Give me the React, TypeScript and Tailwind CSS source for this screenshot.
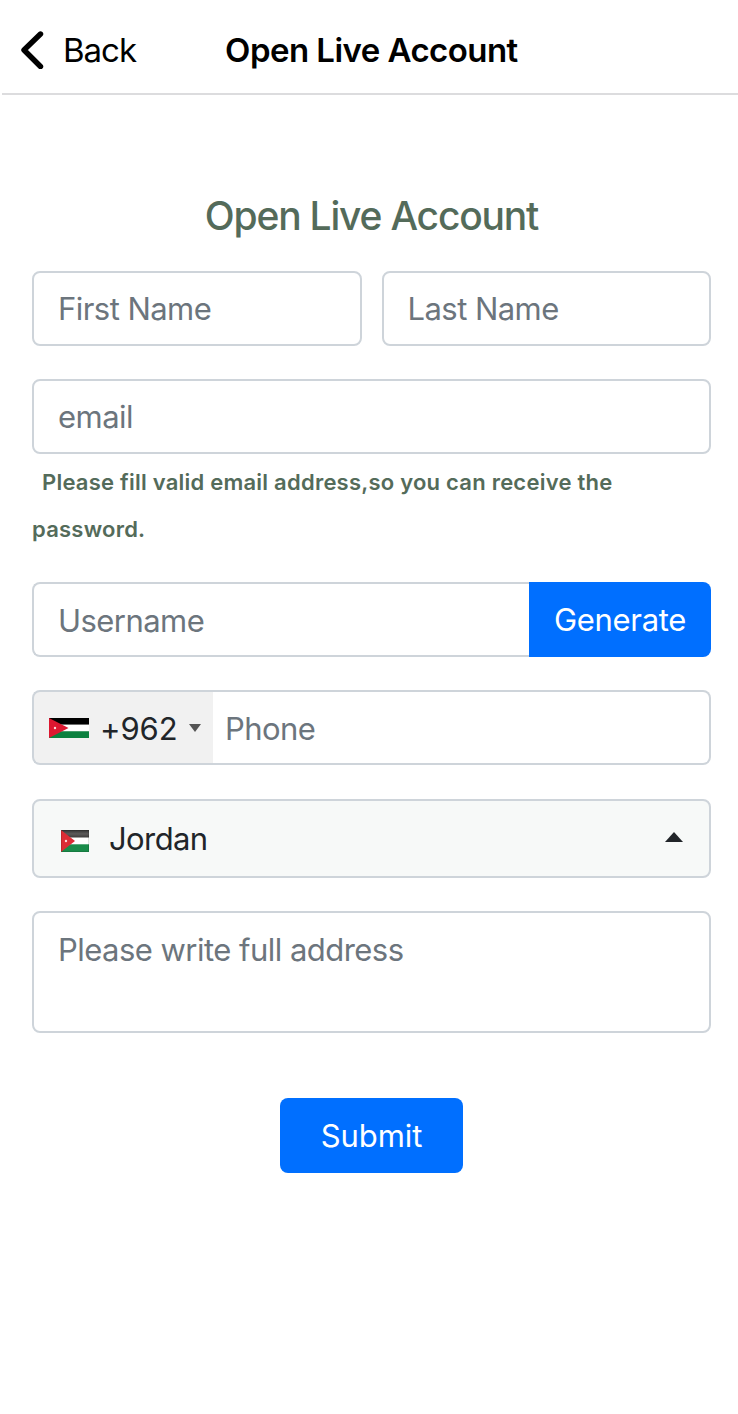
import React from 'react'

interface TextFieldProps {
  placeholder: string
  className?: string
  inset?: string
}

// Plain bordered input
const TextField: React.FC<TextFieldProps> = ({ placeholder, className = 'w-full rounded-lg border-2', inset = 'pl-6' }) => (
  <input
    type="text"
    aria-label={placeholder}
    placeholder={placeholder}
    className={`h-[75px] min-w-0 border-[#ced4da] bg-white text-[31px] tracking-[-0.55px] text-[#212529] outline-none placeholder:text-[#6c757d] ${inset} ${className}`}
  />
)

// Jordan flag with a wide 2:1 ratio
const WideFlag: React.FC = () => (
  <svg width="40" height="20" viewBox="0 0 40 20" aria-hidden="true">
    <path fill="#000" d="M0 0h40v6.7H0z" />
    <path fill="#fff" d="M0 6.7h40v6.6H0z" />
    <path fill="#0c803f" d="M0 13.3h40V20H0z" />
    <path fill="#dd1730" d="M0 0l19.5 10L0 20z" />
    <circle cx="6" cy="10" r="1.2" fill="#fbdada" />
  </svg>
)

// Glossy flag of the country select
const CountryFlag: React.FC = () => (
  <svg className="mt-1" width="28" height="22" viewBox="0 0 28 22" aria-hidden="true">
    <defs>
      <linearGradient id="gloss" x1="0" y1="0" x2="0" y2="1">
        <stop offset="0" stopColor="#333" />
        <stop offset="0.5" stopColor="#5c5a5a" />
        <stop offset="1" stopColor="#3c3a3a" />
      </linearGradient>
    </defs>
    <path fill="url(#gloss)" d="M0 0h28v7.7H0z" />
    <path fill="#fff" d="M0 7.7h28v6.6H0z" />
    <path fill="#1a8c4a" d="M0 14.3h28V22H0z" />
    <path fill="#dc2c35" d="M0 0l14 11L0 22z" />
    <circle cx="5" cy="11" r="1.2" fill="#fbdcdc" />
    <path fill="none" stroke="#000" strokeOpacity="0.12" d="M.5.5h27v21H.5z" />
  </svg>
)

const App: React.FC = () => {
  return (
    <div className="h-[1414px] w-full bg-white font-[Inter,sans-serif] text-[#212529]">
      {/* Navigation bar */}
      <header className="ml-0.5 flex h-[95px] items-center border-b-2 border-[#dcdcde] pt-2 text-black">
        <button className="flex items-center pl-[18px]">
          <svg className="mb-0.5" width="24" height="38" viewBox="0 0 24 38" fill="none" stroke="currentColor" strokeWidth="5.4" aria-hidden="true">
            <path d="M20.5 3L4 19l16.5 16.5" strokeLinecap="round" strokeLinejoin="round" />
          </svg>
          <span className="ml-[19px] text-[33px] tracking-[-1px]">Back</span>
        </button>
        <h1 className="ml-[89px] text-[33px] font-semibold tracking-[-0.55px]">Open Live Account</h1>
      </header>

      <form className="flex flex-col pl-8 pr-[27px] pt-[97px]" onSubmit={(e) => e.preventDefault()}>
        <h2 className="mb-[31px] text-center text-[39px] leading-[48px] font-medium tracking-[-1.2px] text-[#546b5a]">Open Live Account</h2>

        <div className="flex gap-5">
          <TextField placeholder="First Name" />
          <TextField placeholder="Last Name" />
        </div>

        <div className="mt-[33px]">
          <TextField placeholder="email" />
          <p className="mb-[29px] pt-[5px] text-[22px] leading-[47px] font-semibold tracking-[0.23px] text-[#546b5a]">
            <span className="ml-2.5">Please fill valid email address,so you can receive the</span><br />
            password.
          </p>
        </div>

        <div className="flex">
          <TextField placeholder="Username" className="flex-1 rounded-l-lg border-2 border-r-0 pt-0.5" />
          <button type="button" className="h-[75px] w-[182px] rounded-r-lg bg-[#006fff] pt-0.5 text-[31px] tracking-[-0.3px] text-white">Generate</button>
        </div>

        {/* Phone with dial code */}
        <div className="mt-[33px] flex">
          <button type="button" className="flex h-[75px] w-[181px] items-center rounded-l-lg border-2 border-r-0 border-[#ced4da] bg-[#f1f1f1] pl-[15px]">
            <WideFlag />
            <span className="ml-[11px] pt-1 text-[31px] tracking-[-0.1px]">+962</span>
            <svg className="ml-3" width="12" height="8" viewBox="0 0 12 8" fill="#555" aria-hidden="true"><path d="M0 0h12L6 8z" /></svg>
          </button>
          <TextField placeholder="Phone" inset="pl-3" className="flex-1 rounded-r-lg border-2 border-l-0 pt-0.5" />
        </div>

        <button type="button" className="mt-[34px] flex h-[79px] items-center rounded-lg border-2 border-[#ced4da] bg-[#f7f9f8] pl-[27px] pr-[26px]">
          <CountryFlag />
          <span className="ml-5 pt-0.5 text-[31px] tracking-[-0.6px]">Jordan</span>
          <svg className="mb-1 ml-auto" width="18" height="10" viewBox="0 0 18 10" fill="#212529" aria-hidden="true"><path d="M0 10h18L9 0z" /></svg>
        </button>

        <textarea
          aria-label="Please write full address"
          placeholder="Please write full address"
          className="mt-[33px] h-[122px] resize-none rounded-lg border-2 border-[#ced4da] px-6 pt-[13px] text-[31px] leading-[48px] tracking-[-0.53px] outline-none placeholder:text-[#6c757d]"
        />

        <button type="submit" className="mt-[65px] h-[75px] w-[183px] self-center rounded-lg bg-[#006fff] pt-0.5 text-[31px] tracking-[-0.1px] text-white">Submit</button>
      </form>
    </div>
  )
}

export default App
